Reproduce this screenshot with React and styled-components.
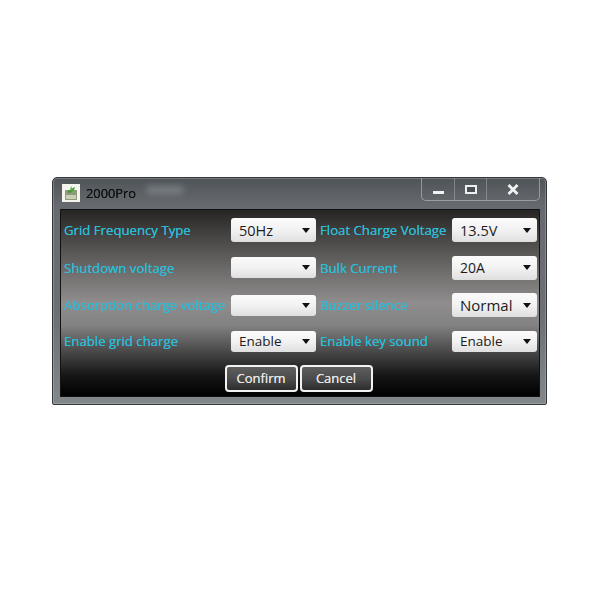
import React from "react";
import styled, { createGlobalStyle } from "styled-components";

const GlobalStyle = createGlobalStyle`
  html, body {
    margin: 0;
    padding: 0;
    background: #ffffff;
  }
  body {
    font-family: "Open Sans", "Liberation Sans", sans-serif;
  }
`;

const Page = styled.div`
  width: 600px;
  height: 600px;
  box-sizing: border-box;
  padding: 177px 0 0 52px;
  background: #ffffff;
  overflow: hidden;
`;

const Window = styled.div`
  width: 495px;
  height: 228px;
  box-sizing: border-box;
  padding: 0 6px 7px 7px;
  display: flex;
  flex-direction: column;
  background: linear-gradient(180deg, #4f5459 0%, #666a6e 12%, #6c7074 60%, #82878a 100%);
  border: 1px solid #34383c;
  border-radius: 5px 5px 2px 2px;
  box-shadow: inset 0 0 0 1px rgba(200, 205, 210, 0.3);
  filter: blur(0.4px);
`;

const TitleBar = styled.div`
  height: 31px;
  flex: none;
  display: flex;
  align-items: flex-start;
  justify-content: space-between;
`;

const TitleLeft = styled.div`
  display: flex;
  align-items: center;
  gap: 6px;
  height: 30px;
  padding-left: 2px;
`;

const AppIcon = styled.svg`
  width: 18px;
  height: 18px;
  display: block;
`;

const Title = styled.span`
  font-size: 12.8px;
  color: #0e1012;
  text-shadow: 0 0 0.5px #0e1012;
`;

const TitleSmudge = styled.div`
  width: 36px;
  height: 8px;
  margin: 0 0 6px 5px;
  background: rgba(175, 182, 188, 0.35);
  filter: blur(3px);
`;

const Controls = styled.div`
  display: flex;
  height: 22px;
  border: 1px solid rgba(205, 212, 218, 0.5);
  border-top: none;
  border-radius: 0 0 5px 5px;
`;

const Control = styled.div`
  width: ${(p) => p.$w}px;
  display: flex;
  align-items: center;
  justify-content: center;
  border-left: ${(p) => (p.$first ? "none" : "1px solid rgba(205, 212, 218, 0.35)")};
`;

const MinGlyph = styled.div`
  width: 11px;
  height: 3px;
  margin-top: 6px;
  background: #f1f2f3;
`;

const MaxGlyph = styled.div`
  width: 8px;
  height: 5px;
  border: 2px solid #eceeef;
  background: #4b4f53;
`;

const CloseGlyph = styled.svg`
  width: 12px;
  height: 11px;
  display: block;
`;

const Client = styled.div`
  flex: 1;
  box-sizing: border-box;
  padding: 8px 3px 4px 3px;
  display: flex;
  flex-direction: column;
  background: linear-gradient(
    180deg,
    #272424 0%,
    #423f3f 12%,
    #716e6e 34%,
    #8f8d8d 50%,
    #828282 62%,
    #494949 76%,
    #161616 89%,
    #000000 100%
  );
  border: 1px solid #101214;
`;

const FormGrid = styled.div`
  display: grid;
  grid-template-columns: 167px 85px 136px 85px;
  grid-template-rows: 24px 24px 24px 21px;
  row-gap: 13.5px;
  column-gap: 0;
  align-items: center;
`;

const Label = styled.div`
  font-size: 13.2px;
  white-space: nowrap;
  color: #2cbcd8;
  text-shadow: 0 0 0.6px #2cbcd8;
  padding-left: ${(p) => (p.$right ? "4px" : "0")};
  filter: ${(p) => (p.$soft ? "blur(0.6px)" : "none")};
`;

const Select = styled.div`
  height: ${(p) => p.$h}px;
  box-sizing: border-box;
  padding: 0 6px 0 8px;
  display: flex;
  align-items: center;
  justify-content: space-between;
  font-size: ${(p) => p.$size}px;
  color: #1c1c1c;
  background: linear-gradient(180deg, #fbfbfb 0%, #f2f2f2 50%, #dfdfdf 100%);
  border-radius: 3px;
`;

const Caret = styled.span`
  width: 0;
  height: 0;
  margin-left: auto;
  border-left: 4px solid transparent;
  border-right: 4px solid transparent;
  border-top: 5px solid #111111;
`;

const Actions = styled.div`
  display: flex;
  justify-content: center;
  gap: 2px;
  margin-top: 13px;
  padding-right: 3px;
`;

const Button = styled.button`
  width: 73px;
  height: 27px;
  padding: 0;
  font-family: inherit;
  font-size: 13px;
  color: #e6e6e6;
  text-shadow: 0 0 0.4px #e6e6e6;
  background: linear-gradient(180deg, #5e5e5e 0%, #4c4c4c 50%, #2d2d2d 100%);
  border: 2px solid #f2f2f2;
  border-radius: 4px;
`;

const fields = [
  { label: "Grid Frequency Type", value: "50Hz", h: 24, size: 14.5 },
  { label: "Float Charge Voltage", value: "13.5V", h: 24, size: 14.5, right: true },
  { label: "Shutdown voltage", value: "", h: 21, size: 13 },
  { label: "Bulk Current", value: "20A", h: 24, size: 14, right: true },
  { label: "Absorption charge voltage", value: "", h: 21, size: 13, soft: true },
  { label: "Buzzer silence", value: "Normal", h: 24, size: 15, right: true, soft: true },
  { label: "Enable grid charge", value: "Enable", h: 21, size: 13.5 },
  { label: "Enable key sound", value: "Enable", h: 21, size: 13.5, right: true },
];

function App() {
  return (
    <Page>
      <GlobalStyle />
      <Window>
        <TitleBar>
          <TitleLeft>
            <AppIcon viewBox="0 0 18 18">
              <rect width="18" height="18" fill="#f4f5ee" />
              <rect x="3" y="6" width="12" height="10" fill="#8f9a78" />
              <rect x="4" y="11" width="10" height="4" fill="#c9cfb4" />
              <path d="M5 8 L9 5 L13 3 L12 6 L8 9 Z" fill="#3f9a35" />
              <path d="M9 2 L11 6 L8 7 Z" fill="#5fb548" />
            </AppIcon>
            <Title>2000Pro</Title>
            <TitleSmudge />
          </TitleLeft>
          <Controls>
            <Control $w={32} $first>
              <MinGlyph />
            </Control>
            <Control $w={31}>
              <MaxGlyph />
            </Control>
            <Control $w={52}>
              <CloseGlyph viewBox="0 0 12 11">
                <path d="M1.5 1 L10.5 10 M10.5 1 L1.5 10" stroke="#f1f2f3" strokeWidth="2.8" />
              </CloseGlyph>
            </Control>
          </Controls>
        </TitleBar>
        <Client>
          <FormGrid>
            {fields.map((f) => (
              <React.Fragment key={f.label}>
                <Label $right={f.right} $soft={f.soft}>
                  {f.label}
                </Label>
                <Select $h={f.h} $size={f.size}>
                  {f.value}
                  <Caret />
                </Select>
              </React.Fragment>
            ))}
          </FormGrid>
          <Actions>
            <Button>Confirm</Button>
            <Button>Cancel</Button>
          </Actions>
        </Client>
      </Window>
    </Page>
  );
}

export default App;
